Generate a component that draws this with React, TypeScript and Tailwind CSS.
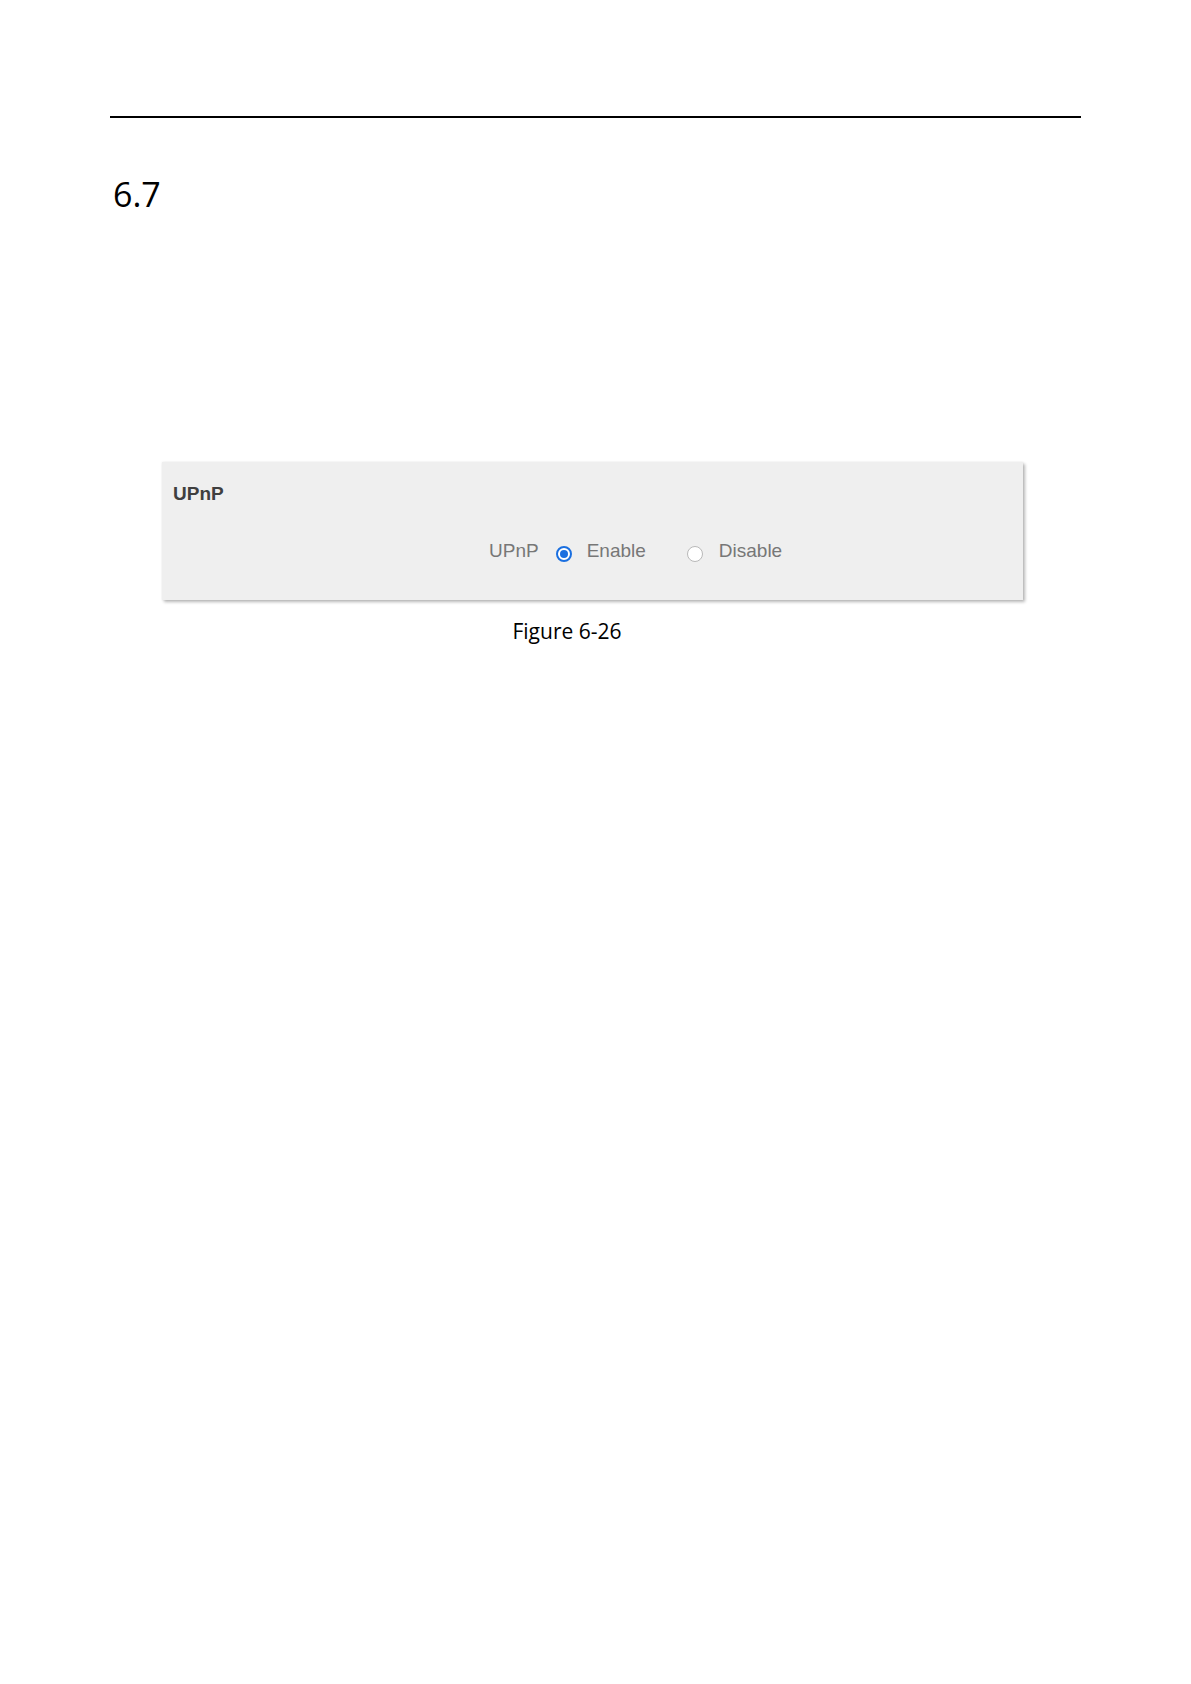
import React from 'react';

function Radio({ checked }: { checked: boolean }) {
  return checked ? (
    <span className="mt-[6px] flex h-[16px] w-[16px] items-center justify-center rounded-full border-[2px] border-[#1a6fe0] bg-white">
      <span className="h-[8px] w-[8px] rounded-full bg-[#1a6fe0]" />
    </span>
  ) : (
    <span className="mt-[6px] h-[16px] w-[16px] rounded-full border border-[#b9b9b9] bg-white" />
  );
}

export default function App() {
  return (
    <div className="min-h-[1684px] w-[1191px] bg-white pt-[116px]">
      <div className="mx-[110px] h-[2px] bg-black" />

      <h2
        className="ml-[113px] mt-[56px] text-[34px] leading-[40px] font-normal text-black"
        style={{ fontFamily: '"Open Sans", sans-serif' }}
      >
        6.7
      </h2>

      {/* Figure */}
      <div
        className="ml-[162px] mt-[248px] w-[861px] h-[138px] bg-[#efefef] shadow-[2px_2px_3px_rgba(0,0,0,0.28),0_0_2px_rgba(0,0,0,0.08)] pl-[11px] pt-[22px]"
        style={{ fontFamily: '"Liberation Sans", Arial, sans-serif' }}
      >
        <div className="text-[19px] leading-[20px] font-bold text-[#3f3f3f]">UPnP</div>
        <div className="mt-[36px] ml-[316px] flex items-center text-[19px] leading-[20px] text-[#777777]">
          <span>UPnP</span>
          <span className="ml-[17px] flex items-center">
            <Radio checked />
          </span>
          <span className="ml-[15px]">Enable</span>
          <span className="ml-[41px] flex items-center">
            <Radio checked={false} />
          </span>
          <span className="ml-[16px]">Disable</span>
        </div>
      </div>

      <div className="ml-[110px] mt-[17px] flex w-[914px] justify-center">
        <span
          className="text-[21px] leading-[28px] text-black"
          style={{ fontFamily: '"Open Sans", sans-serif' }}
        >
          Figure 6-26
        </span>
      </div>
    </div>
  );
}
